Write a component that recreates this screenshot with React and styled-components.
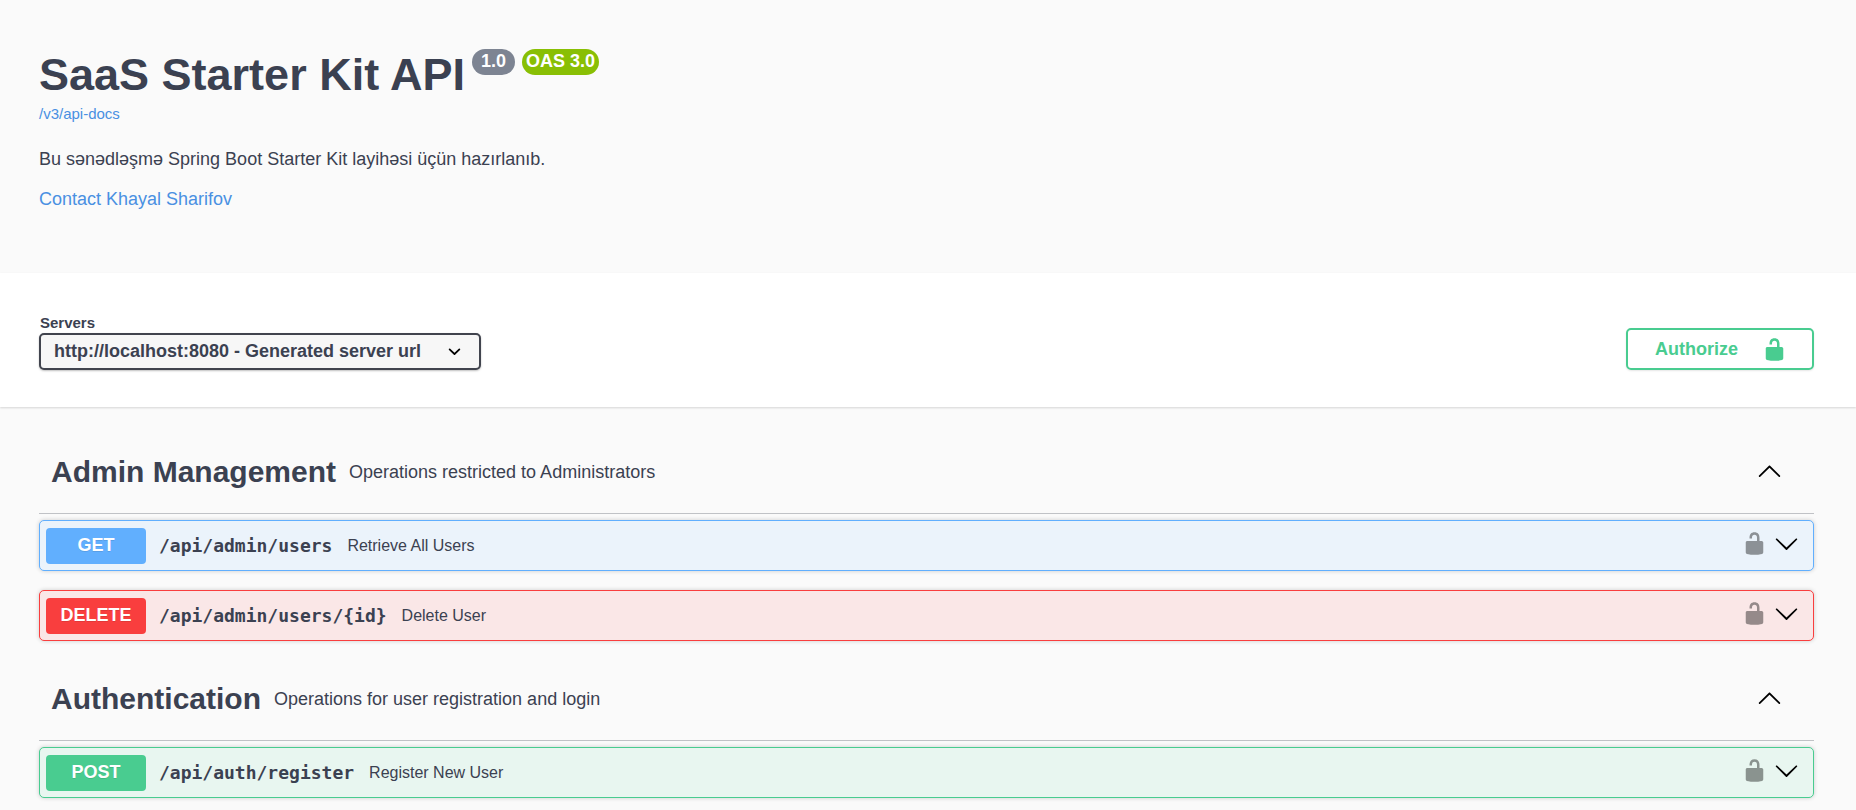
import { useState } from "react";
import styled, { createGlobalStyle } from "styled-components";

const methods = {
  get: { color: "#61affe", background: "#ebf3fb" },
  delete: { color: "#f93e3e", background: "#fae7e7" },
  post: { color: "#49cc90", background: "#e8f6f0" },
};

const tags = [
  {
    name: "Admin Management",
    description: "Operations restricted to Administrators",
    operations: [
      { method: "get", path: "/api/admin/users", summary: "Retrieve All Users" },
      { method: "delete", path: "/api/admin/users/{id}", summary: "Delete User" },
    ],
  },
  {
    name: "Authentication",
    description: "Operations for user registration and login",
    operations: [
      { method: "post", path: "/api/auth/register", summary: "Register New User" },
    ],
  },
];

function UnlockIcon() {
  return (
    <Icon viewBox="0 0 20 20" aria-hidden="true">
      <path d="M15.8 8H14V5.6C14 2.703 12.665 1 10 1 7.334 1 6 2.703 6 5.6V6h2v-.801C8 3.754 8.797 3 10 3c1.203 0 2 .754 2 2.199V8H4c-.553 0-1 .646-1 1.199V17c0 .549.428 1.139.951 1.307l1.197.387C5.672 18.861 6.55 19 7.1 19h5.8c.549 0 1.428-.139 1.951-.307l1.196-.387c.524-.167.953-.757.953-1.306V9.199C17 8.646 16.352 8 15.8 8z" />
    </Icon>
  );
}

function ArrowIcon({ up }) {
  return (
    <Icon viewBox="0 0 20 20" aria-hidden="true">
      {up ? (
        <path d="M17.418 14.908c.272.27.709.27.979 0s.271-.701 0-.969l-7.908-7.83c-.27-.268-.707-.268-.979 0l-7.908 7.83c-.27.268-.271.701 0 .969.271.27.709.27.979 0L10 7.767l7.418 7.141z" />
      ) : (
        <path d="M17.418 6.109c.272-.268.709-.268.979 0s.271.701 0 .969l-7.908 7.83c-.27.268-.707.268-.979 0l-7.908-7.83c-.27-.268-.271-.701 0-.969.271-.268.709-.268.979 0L10 13.25l7.418-7.141z" />
      )}
    </Icon>
  );
}

function Operation({ method, path, summary }) {
  return (
    <OperationRow $method={method}>
      <OperationButton type="button">
        <Method $method={method}>{method.toUpperCase()}</Method>
        <Path>{path}</Path>
        <Summary>{summary}</Summary>
      </OperationButton>
      <LockButton type="button" aria-label="authorization button unlocked">
        <UnlockIcon />
      </LockButton>
      <ToggleButton type="button" aria-label={path}>
        <ArrowIcon />
      </ToggleButton>
    </OperationRow>
  );
}

function Tag({ name, description, operations }) {
  const [open, setOpen] = useState(true);

  return (
    <section>
      <TagHeader>
        <TagName>{name}</TagName>
        <TagDescription>{description}</TagDescription>
        <ToggleButton
          type="button"
          aria-label="Toggle operations"
          aria-expanded={open}
          onClick={() => setOpen(!open)}
        >
          <ArrowIcon up={open} />
        </ToggleButton>
      </TagHeader>
      {open && (
        <Operations>
          {operations.map((op) => (
            <Operation key={op.method + op.path} {...op} />
          ))}
        </Operations>
      )}
    </section>
  );
}

export default function App() {
  return (
    <>
      <GlobalStyle />
      <Info>
        <TitleRow>
          <Title>SaaS Starter Kit API</Title>
          <Version>1.0</Version>
          <Version $oas>OAS 3.0</Version>
        </TitleRow>
        <DocsLink href="/v3/api-docs">/v3/api-docs</DocsLink>
        <Description>
          Bu sənədləşmə Spring Boot Starter Kit layihəsi üçün hazırlanıb.
        </Description>
        <ContactLink href="#contact">Contact Khayal Sharifov</ContactLink>
      </Info>
      <SchemeBar>
        <div>
          <ServersLabel htmlFor="servers">Servers</ServersLabel>
          <SelectBox>
            <Select id="servers">
              <option>http://localhost:8080 - Generated server url</option>
            </Select>
            <SelectArrow viewBox="0 0 20 20" aria-hidden="true">
              <path d="M13.418 7.859a.695.695 0 01.978 0 .68.68 0 010 .969l-3.908 3.83a.697.697 0 01-.979 0l-3.908-3.83a.68.68 0 010-.969.695.695 0 01.978 0L10 11l3.418-3.141z" />
            </SelectArrow>
          </SelectBox>
        </div>
        <Authorize type="button">
          Authorize
          <UnlockIcon />
        </Authorize>
      </SchemeBar>
      <Main>
        {tags.map((tag) => (
          <Tag key={tag.name} {...tag} />
        ))}
      </Main>
    </>
  );
}

const GlobalStyle = createGlobalStyle`
* {
  box-sizing: border-box;
}
body {
  margin: 0;
  background: #fafafa;
  color: #3b4151;
  font-family: "Liberation Sans", Arial, sans-serif;
  font-size: 18px;
  line-height: 20px;
}
button, select {
  font-family: inherit;
  color: inherit;
  cursor: pointer;
}
`;

const Icon = styled.svg`
  display: block;
  flex: none;
  width: 25px;
  height: 25px;
  fill: currentColor;
`;

const Info = styled.header`
  display: flex;
  flex-direction: column;
  align-items: flex-start;
  padding: 49px 39px 64px;
`;

const TitleRow = styled.div`
  display: flex;
  align-items: flex-start;
  gap: 7px;
`;

const Title = styled.h1`
  margin: 0;
  font-size: 45px;
  line-height: 52px;
`;

const Version = styled.span`
  padding: 2px ${(props) => (props.$oas ? 4 : 9)}px 4px;
  border-radius: 26px;
  background: ${(props) => (props.$oas ? "#89bf04" : "#7d8492")};
  color: #fff;
  font-weight: bold;
`;

const DocsLink = styled.a`
  margin-top: 4px;
  color: #4990e2;
  font-size: 15px;
  line-height: 18px;
  text-decoration: none;
`;

const Description = styled.p`
  margin: 26px 0 20px;
`;

const ContactLink = styled.a`
  color: #4990e2;
  text-decoration: none;
`;

const SchemeBar = styled.section`
  display: flex;
  justify-content: space-between;
  align-items: flex-end;
  padding: 41px 42px 37px 39px;
  background: #fff;
  box-shadow: 0 1px 2px rgba(0, 0, 0, 0.15);
`;

const ServersLabel = styled.label`
  display: block;
  padding: 0 1px 1px;
  font-size: 15px;
  font-weight: bold;
  line-height: 18px;
`;

const SelectBox = styled.div`
  position: relative;
`;

const Select = styled.select`
  appearance: none;
  display: block;
  width: 442px;
  max-width: 100%;
  height: 37px;
  padding: 0 50px 2px 13px;
  border: 2px solid #41444e;
  border-radius: 5px;
  background: #f7f7f7;
  box-shadow: 0 1px 2px rgba(0, 0, 0, 0.25);
  font-size: 18px;
  font-weight: bold;
`;

const SelectArrow = styled.svg`
  position: absolute;
  top: 6px;
  right: 14px;
  width: 25px;
  height: 25px;
  pointer-events: none;
`;

const Authorize = styled.button`
  display: flex;
  align-items: center;
  gap: 24px;
  height: 42px;
  padding: 0 25px 0 27px;
  border: 2px solid #49cc90;
  border-radius: 5px;
  background: transparent;
  box-shadow: 0 1px 2px rgba(0, 0, 0, 0.1);
  color: #49cc90;
  font-size: 18px;
  font-weight: bold;
`;

const Main = styled.main`
  display: grid;
  gap: 25px;
  padding: 32px 42px 12px 39px;
`;

const TagHeader = styled.div`
  display: flex;
  align-items: center;
  gap: 13px;
  height: 75px;
  padding: 0 32px 8px 12px;
  border-bottom: 1px solid rgba(59, 65, 81, 0.3);
`;

const TagName = styled.h2`
  margin: 0;
  font-size: 30px;
  line-height: 36px;
`;

const TagDescription = styled.span`
  flex: 1;
`;

const Operations = styled.div`
  display: grid;
  gap: 19px;
  padding-top: 6px;
`;

const OperationRow = styled.div`
  display: flex;
  align-items: center;
  height: 51px;
  padding: 0 14px 0 6px;
  border: 1px solid ${(props) => methods[props.$method].color};
  border-radius: 5px;
  background: ${(props) => methods[props.$method].background};
  box-shadow: 0 0 4px rgba(0, 0, 0, 0.19);
`;

const OperationButton = styled.button`
  flex: 1;
  display: flex;
  align-items: center;
  gap: 13px;
  padding: 0;
  border: 0;
  background: transparent;
  text-align: left;
`;

const Method = styled.span`
  width: 100px;
  padding: 7px 0 9px;
  border-radius: 4px;
  background: ${(props) => methods[props.$method].color};
  color: #fff;
  font-size: 18px;
  font-weight: bold;
  line-height: 20px;
  text-align: center;
  text-shadow: 0 1px 0 rgba(0, 0, 0, 0.1);
`;

const Path = styled.span`
  padding-right: 2px;
  font-family: "DejaVu Sans Mono", monospace;
  font-size: 18px;
  font-weight: bold;
`;

const Summary = styled.span`
  font-size: 16px;
`;

const ToggleButton = styled.button`
  padding: 0 0 4px;
  border: 0;
  background: transparent;
  color: #000;
`;

const LockButton = styled(ToggleButton)`
  margin-right: 7px;
  opacity: 0.4;
`;
